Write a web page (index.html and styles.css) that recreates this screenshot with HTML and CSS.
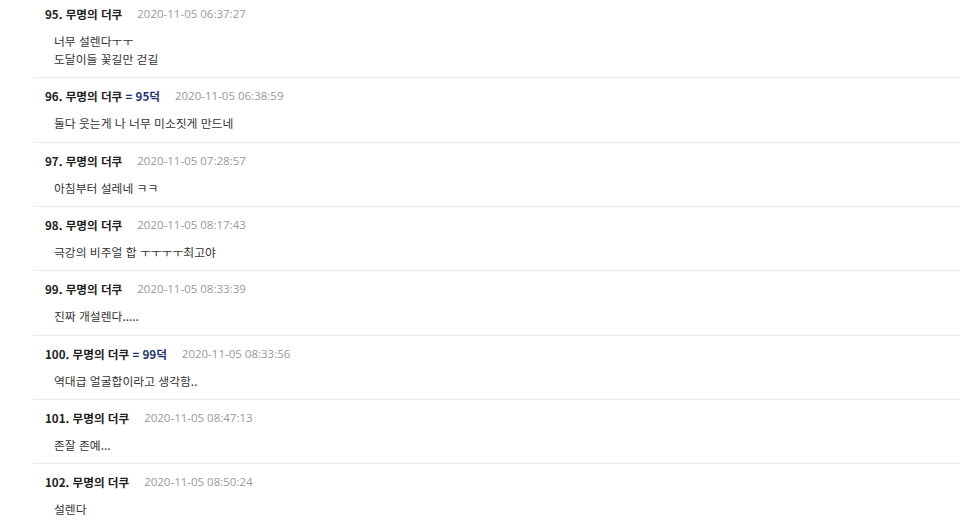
FILE: index.html
```html
<!DOCTYPE html>
<html lang="ko">
<head>
<meta charset="utf-8">
<link rel="stylesheet" href="styles.css">
</head>
<body>
<ul class="comments">
  <li class="comment">
    <div class="meta"><span class="name">95. 무명의 더쿠</span><span class="date">2020-11-05 06:37:27</span></div>
    <div class="body">너무 설렌다ㅜㅜ<br>도달이들 꽃길만 걷길</div>
  </li>
  <li class="comment">
    <div class="meta"><span class="name">96. 무명의 더쿠 <span class="reply">= 95덕</span></span><span class="date">2020-11-05 06:38:59</span></div>
    <div class="body">둘다 웃는게 나 너무 미소짓게 만드네</div>
  </li>
  <li class="comment">
    <div class="meta"><span class="name">97. 무명의 더쿠</span><span class="date">2020-11-05 07:28:57</span></div>
    <div class="body">아침부터 설레네 ㅋㅋ</div>
  </li>
  <li class="comment">
    <div class="meta"><span class="name">98. 무명의 더쿠</span><span class="date">2020-11-05 08:17:43</span></div>
    <div class="body">극강의 비주얼 합 ㅜㅜㅜㅜ최고야</div>
  </li>
  <li class="comment">
    <div class="meta"><span class="name">99. 무명의 더쿠</span><span class="date">2020-11-05 08:33:39</span></div>
    <div class="body">진짜 개설렌다.....</div>
  </li>
  <li class="comment">
    <div class="meta"><span class="name">100. 무명의 더쿠 <span class="reply">= 99덕</span></span><span class="date">2020-11-05 08:33:56</span></div>
    <div class="body">역대급 얼굴합이라고 생각함..</div>
  </li>
  <li class="comment">
    <div class="meta"><span class="name">101. 무명의 더쿠</span><span class="date">2020-11-05 08:47:13</span></div>
    <div class="body">존잘 존예...</div>
  </li>
  <li class="comment">
    <div class="meta"><span class="name">102. 무명의 더쿠</span><span class="date">2020-11-05 08:50:24</span></div>
    <div class="body">설렌다</div>
  </li>
</ul>
</body>
</html>
```
FILE: styles.css
```css
html, body {
  margin: 0;
  padding: 0;
  background: #fff;
}
body {
  font-family: "Noto Sans CJK KR", "Noto Sans", sans-serif;
  color: #333;
  overflow: hidden;
}
.comments {
  list-style: none;
  margin: -4px 0 0 33px;
  padding: 0;
}
.comment {
  padding: 10px 0 9.33px 12px;
  border-bottom: 1px solid #ebebeb;
}
.meta {
  display: flex;
  align-items: center;
  gap: 15px;
  height: 16px;
  line-height: 16px;
  white-space: nowrap;
}
.name {
  font-size: 11.6px;
  font-weight: bold;
  color: #222;
}
.reply {
  color: #1b3670;
}
.date {
  font-family: "Open Sans", "Noto Sans", sans-serif;
  font-size: 11.5px;
  color: #999;
}
.body {
  margin-top: 10px;
  padding-left: 9px;
  font-size: 11.8px;
  line-height: 18px;
  color: #333;
}
```
